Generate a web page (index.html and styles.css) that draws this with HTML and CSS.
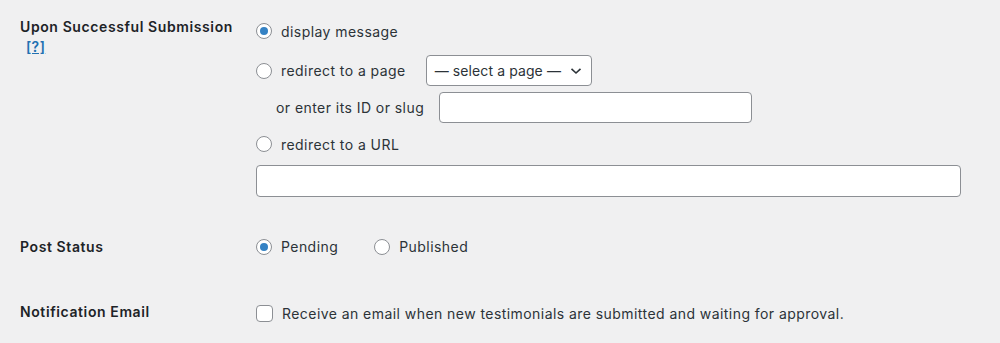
FILE: index.html
```html
<!DOCTYPE html>
<html lang="en">
<head>
    <meta charset="UTF-8">
    <title>Testimonial Form Settings</title>
    <link rel="stylesheet" href="styles.css">
</head>
<body>

    <div class="form-table">

        <div class="row row-submission">
            <div class="row-label">
                Upon Successful Submission
                <a href="#" class="help-link">[?]</a>
            </div>
            <div class="row-field">
                <label class="option option-first">
                    <input type="radio" name="success" checked>
                    <span>display message</span>
                </label>

                <div class="option option-page">
                    <label class="option-inline">
                        <input type="radio" name="success">
                        <span>redirect to a page</span>
                    </label>
                    <div class="select-box">
                        <span>&mdash; select a page &mdash;</span>
                        <svg width="12" height="8" viewBox="0 0 12 8"><path d="M1.5 1.8 L6 6 L10.5 1.8" fill="none" stroke="#2c3338" stroke-width="1.6"/></svg>
                    </div>
                </div>

                <div class="option option-slug">
                    <span class="slug-label">or enter its ID or slug</span>
                    <input type="text" class="text-input slug-input">
                </div>

                <label class="option option-url">
                    <input type="radio" name="success">
                    <span>redirect to a URL</span>
                </label>

                <input type="text" class="text-input url-input">
            </div>
        </div>

        <div class="row row-status">
            <div class="row-label">Post Status</div>
            <div class="row-field field-inline">
                <label class="option-inline">
                    <input type="radio" name="status" checked>
                    <span>Pending</span>
                </label>
                <label class="option-inline">
                    <input type="radio" name="status">
                    <span>Published</span>
                </label>
            </div>
        </div>

        <div class="row row-email">
            <div class="row-label">Notification Email</div>
            <div class="row-field">
                <label class="option-inline">
                    <input type="checkbox">
                    <span>Receive an email when new testimonials are submitted and waiting for approval.</span>
                </label>
            </div>
        </div>

    </div>

</body>
</html>
```

FILE: styles.css
```css
body {
    margin: 0;
    padding: 0;
    background: #f0f0f1;
    color: #2c3338;
    font-family: Inter, "Noto Sans", sans-serif;
    font-size: 14px;
    letter-spacing: 0.44px;
}

.form-table {
    padding-left: 20px;
}

.row {
    display: grid;
    grid-template-columns: 236px 1fr;
    align-items: start;
}

.row-label {
    font-weight: 600;
    line-height: 20px;
    letter-spacing: 0.6px;
    color: #1d2327;
}

.help-link {
    display: table;
    margin-left: 6px;
    color: #2271b1;
    font-weight: 600;
    letter-spacing: 0.4px;
}

.row-submission {
    padding-top: 17px;
}

.row-submission .row-field {
    padding-top: 4px;
}

.row-status {
    margin-top: 40px;
}

.row-status .row-field {
    padding-top: 1px;
}

.row-email {
    margin-top: 45px;
}

.row-email .row-field {
    padding-top: 3px;
}

.option,
.option-inline {
    display: flex;
    align-items: center;
}

.option-first {
    height: 20px;
}

.option-page {
    margin-top: 14px;
    height: 31px;
}

.option-slug {
    margin-top: 6px;
    height: 31px;
}

.option-url {
    margin-top: 11px;
    height: 20px;
}

.field-inline {
    display: flex;
    gap: 36px;
}

input[type="radio"],
input[type="checkbox"] {
    appearance: none;
    -webkit-appearance: none;
    width: 16px;
    height: 16px;
    margin: 0 9px 0 0;
    border: 1px solid #8c8f94;
    background: #fff;
    box-sizing: border-box;
    flex-shrink: 0;
    position: relative;
}

input[type="radio"] {
    border-radius: 50%;
}

input[type="radio"]:checked::before {
    content: "";
    position: absolute;
    left: 3px;
    top: 3px;
    width: 8px;
    height: 8px;
    border-radius: 50%;
    background: #3582c4;
}

input[type="checkbox"] {
    width: 17px;
    height: 17px;
    border-radius: 4px;
}

.select-box {
    display: flex;
    align-items: center;
    gap: 9px;
    box-sizing: border-box;
    height: 31px;
    margin-left: 20px;
    padding: 0 9px 0 8px;
    border: 1px solid #8c8f94;
    border-radius: 4px;
    background: #fff;
    letter-spacing: 0.1px;
}

.slug-label {
    margin-left: 20px;
    margin-right: 15px;
}

.text-input {
    box-sizing: border-box;
    border: 1px solid #8c8f94;
    border-radius: 4px;
    background: #fff;
    margin: 0;
    padding: 0 8px;
}

.slug-input {
    width: 313px;
    height: 31px;
}

.url-input {
    display: block;
    width: 705px;
    height: 32px;
    margin-top: 11px;
}
```
